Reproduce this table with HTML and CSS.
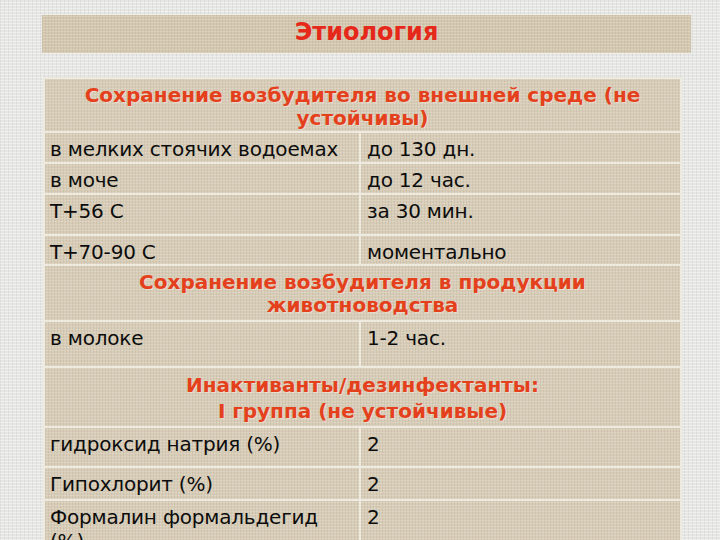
FILE: index.html
```html
<!DOCTYPE html>
<html lang="ru">
<head>
<meta charset="utf-8">
<title>Этиология</title>
<link rel="stylesheet" href="styles.css">
</head>
<body>
<div class="slide">
  <div class="title-bar"><h1 class="title">Этиология</h1></div>
  <div class="grid">
    <div class="cell head h1">Сохранение возбудителя во внешней среде (не<br>устойчивы)</div>
    <div class="cell">в мелких стоячих водоемах</div><div class="cell c2">до 130 дн.</div>
    <div class="cell">в моче</div><div class="cell c2">до 12 час.</div>
    <div class="cell">Т+56 С</div><div class="cell c2">за 30 мин.</div>
    <div class="cell">Т+70-90 С</div><div class="cell c2">моментально</div>
    <div class="cell head h2">Сохранение возбудителя в продукции<br>животноводства</div>
    <div class="cell">в молоке</div><div class="cell c2">1-2 час.</div>
    <div class="cell head h3">Инактиванты/дезинфектанты:<br>I группа (не устойчивые)</div>
    <div class="cell">гидроксид натрия (%)</div><div class="cell c2">2</div>
    <div class="cell">Гипохлорит (%)</div><div class="cell c2">2</div>
    <div class="cell">Формалин формальдегид<br>(%)</div><div class="cell c2">2</div>
  </div>
</div>
</body>
</html>
```

FILE: styles.css
```css
html, body {
  margin: 0;
  padding: 0;
}
body {
  width: 720px;
  height: 540px;
  overflow: hidden;
  background-color: #e6e6e4;
  background-image:
    repeating-linear-gradient(0deg, rgba(255,255,255,0.4) 0 1px, transparent 1px 3px),
    repeating-linear-gradient(90deg, rgba(190,190,188,0.3) 0 1px, transparent 1px 4px);
  font-family: "DejaVu Sans", Verdana, sans-serif;
}
.slide {
  padding-top: 15px;
}
.title-bar {
  margin-left: 42px;
  width: 649px;
  height: 38px;
  background-color: #d4c7af;
  background-image:
    repeating-linear-gradient(0deg, rgba(255,255,255,0.18) 0 1px, transparent 1px 3px),
    repeating-linear-gradient(90deg, rgba(110,90,60,0.09) 0 1px, transparent 1px 3px);
  text-align: center;
}
.title {
  margin: 0;
  font-size: 24px;
  line-height: 34px;
  font-weight: bold;
  color: #e5281a;
}
.grid {
  margin-top: 24px;
  margin-left: 43px;
  width: 635px;
  padding: 2px;
  background: #efeadf;
  display: grid;
  grid-template-columns: 314px 319px;
  grid-template-rows: 52px 29px 29px 39px 28px 54px 44px 58px 38px 31px 59px;
  gap: 2px;
}
.cell {
  background-color: #d7ccb7;
  background-image:
    repeating-linear-gradient(0deg, rgba(255,255,255,0.16) 0 1px, transparent 1px 3px),
    repeating-linear-gradient(90deg, rgba(110,90,60,0.09) 0 1px, transparent 1px 3px);
  font-size: 20px;
  line-height: 24px;
  letter-spacing: -0.2px;
  color: #0c0c0c;
  padding: 4px 0 0 5px;
  white-space: nowrap;
}
.c2 {
  padding-left: 6px;
}
.head {
  grid-column: 1 / 3;
  text-align: center;
  font-weight: bold;
  letter-spacing: 0;
  color: #e5401c;
  padding-left: 0;
  text-shadow: 1px 1px 0 rgba(255,240,230,0.45);
}
.h1 {
  line-height: 23px;
  padding-top: 5px;
}
.h2 {
  line-height: 23px;
  padding-top: 5px;
}
.h3 {
  line-height: 26px;
  padding-top: 4px;
}
```
